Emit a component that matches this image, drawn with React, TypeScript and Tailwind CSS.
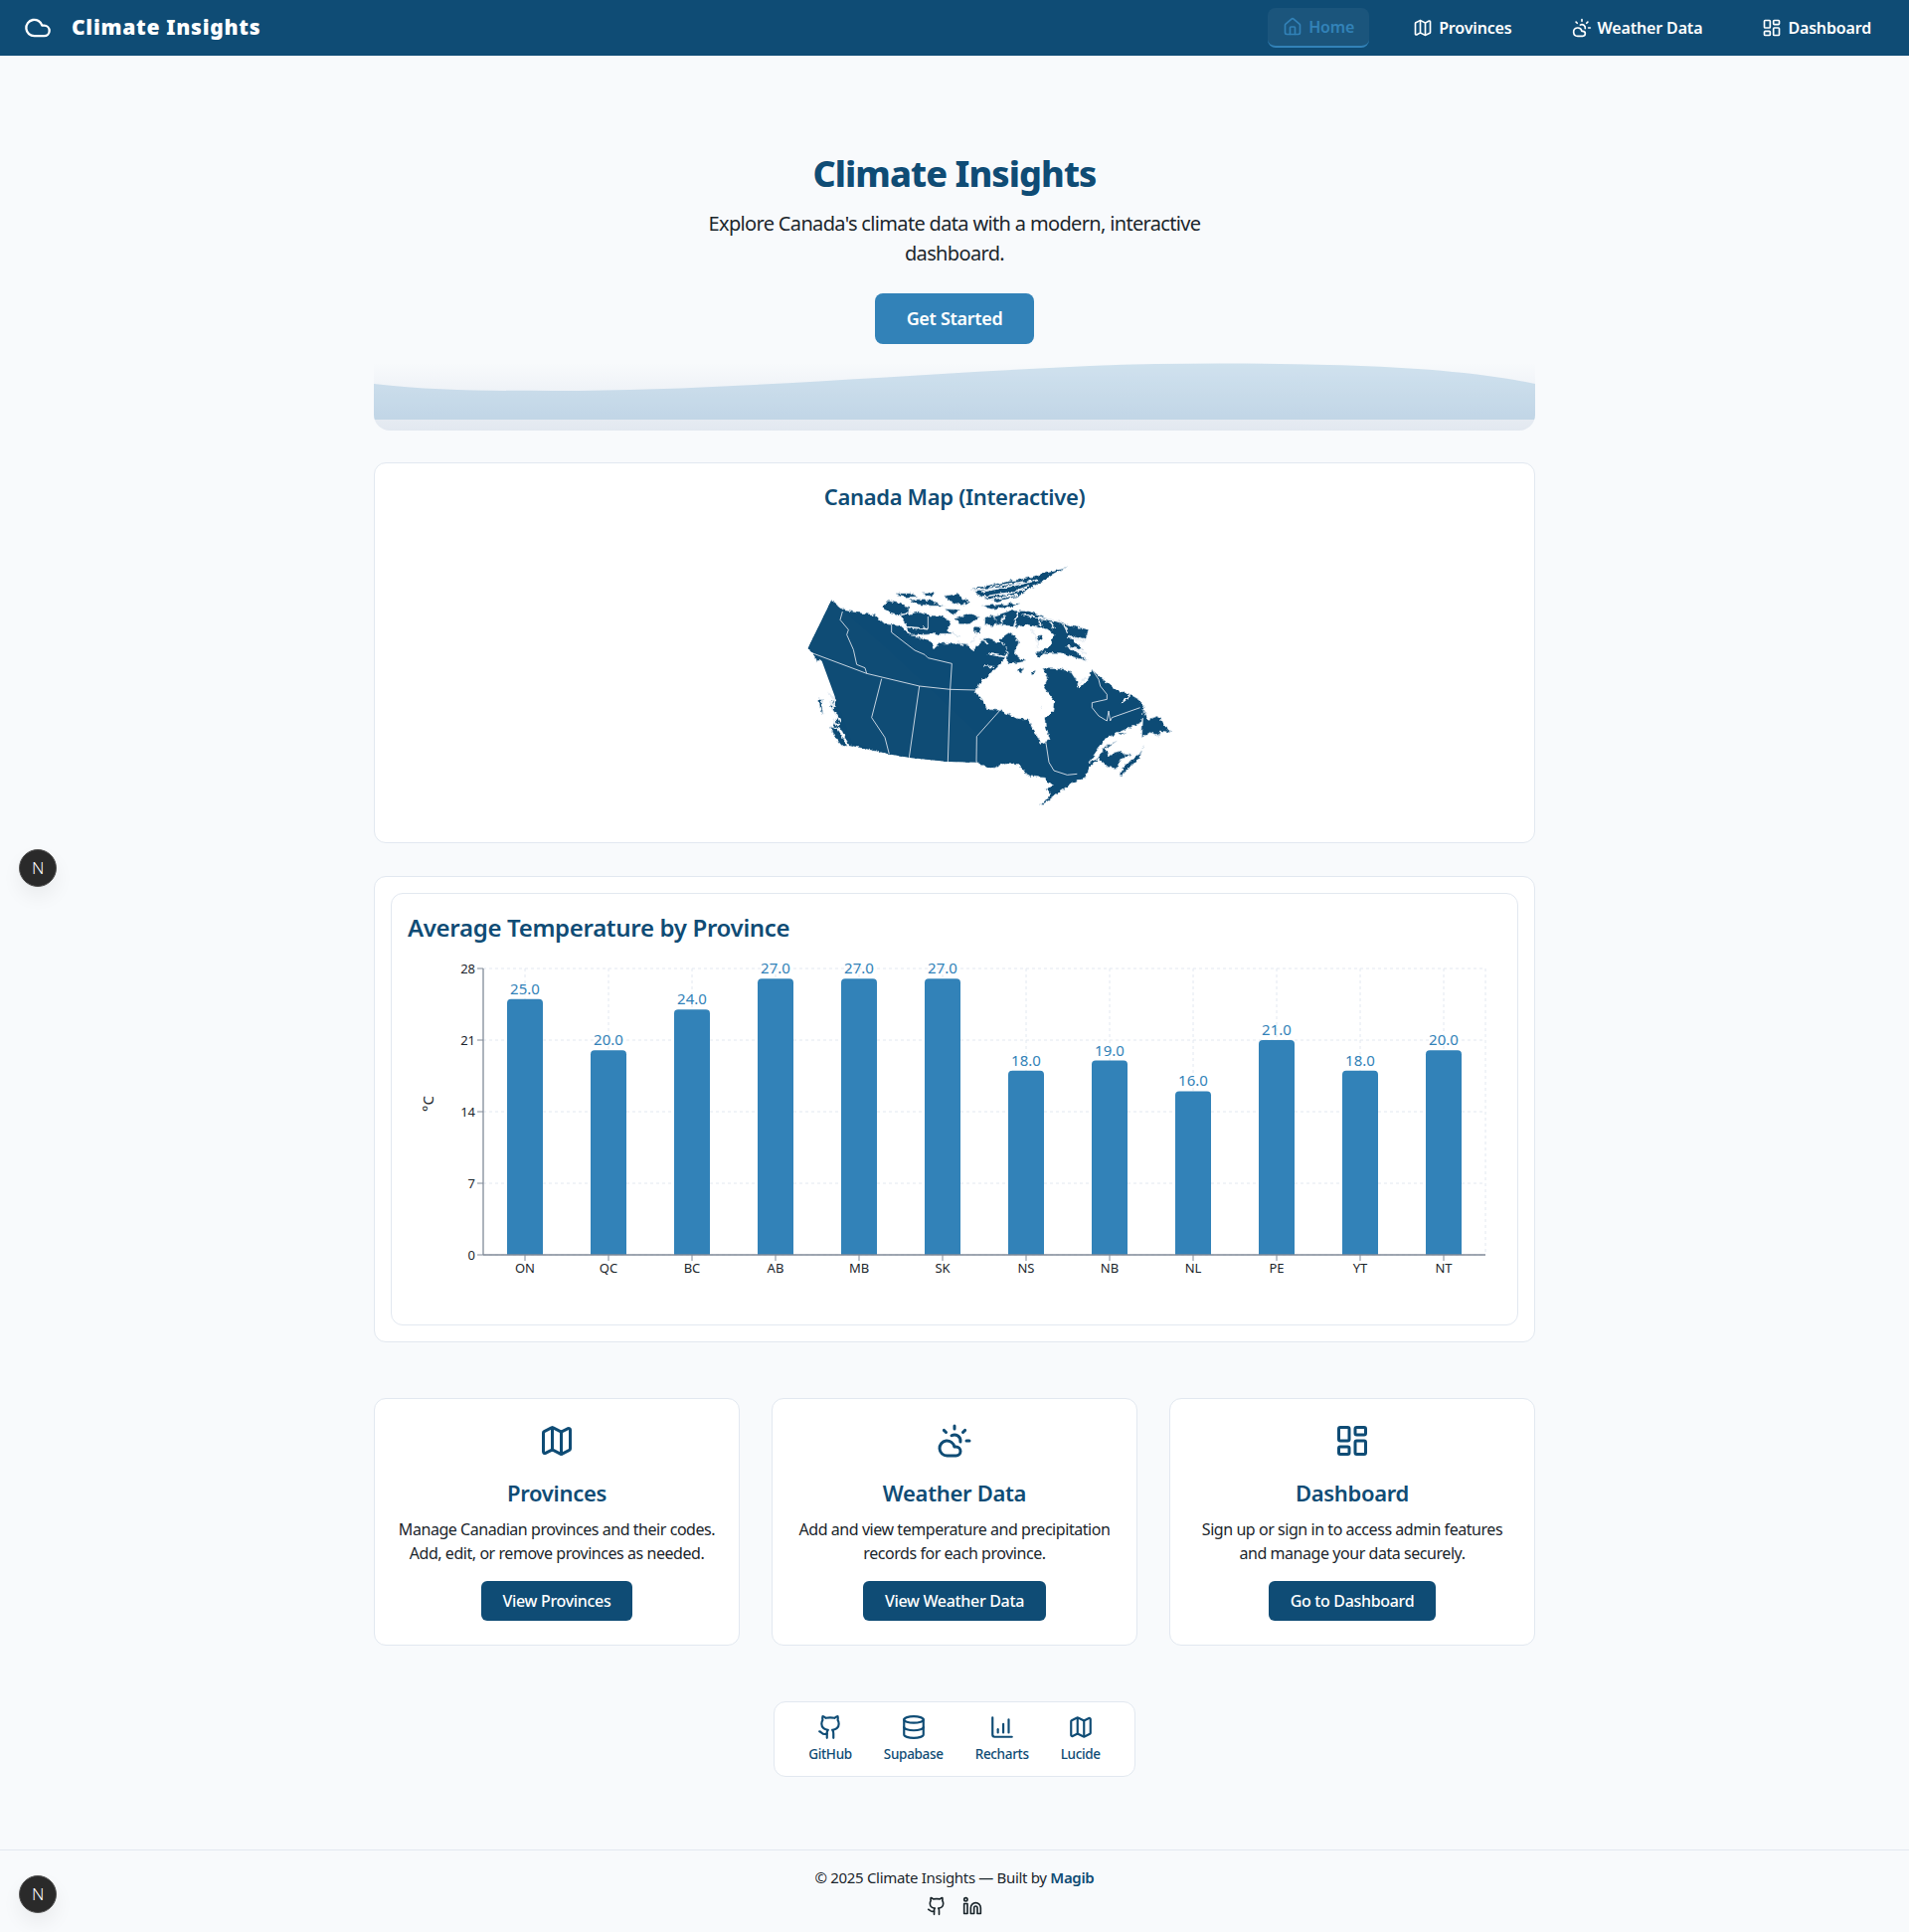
import { Cloud, House, Map, CloudSun, LayoutDashboard, Github, Database, ChartColumnIncreasing, Linkedin } from "lucide-react";

const NAVY = "#0f4c75";
const BLUE = "#3282b8";

const data: [string, number][] = [
  ["ON", 25], ["QC", 20], ["BC", 24], ["AB", 27], ["MB", 27], ["SK", 27],
  ["NS", 18], ["NB", 19], ["NL", 16], ["PE", 21], ["YT", 18], ["NT", 20],
];

const land = [
  "M138,162 L68,305 L85,322 L92,345 L118,340 L132,385 L150,430 L145,465 L135,480 L158,515 L145,540 L170,555 L180,578 L195,600 L310,625 L375,636 L490,648 L578,650 L590,658 L625,668 L665,652 L700,655 L735,692 L780,697 L805,718 L785,732 L800,745 L768,782 L790,768 L820,745 L860,715 L905,695 L918,665 L945,640 L975,665 L1000,668 L1014,640 L1032,632 L1012,618 L1000,622 L975,630 L965,608 L1000,586 L965,600 L940,640 L915,650 L938,618 L960,585 L1000,562 L1040,545 L1075,528 L1084,485 L1070,462 L1040,445 L1000,432 L965,405 L922,368 L912,400 L888,425 L875,398 L860,375 L825,368 L776,366 L792,395 L780,425 L810,465 L806,497 L782,515 L784,540 L798,582 L772,592 L745,548 L735,518 L700,518 L650,493 L608,490 L594,462 L574,440 L588,408 L620,380 L655,345 L668,318 L665,295 L635,285 L600,275 L580,295 L570,312 L540,292 L465,290 L450,305 L438,282 L395,270 L375,265 L345,238 L300,232 L270,205 L200,195 L175,190 Z",
  "M668,345 L670,322 L662,300 L645,280 L680,258 L705,288 L690,318 L722,346 L690,352 L676,354 Z",
  "M632,207 L680,192 L740,194 L790,217 L860,237 L915,250 L902,280 L852,267 L900,310 L852,297 L910,345 L830,320 L792,320 L762,330 L757,320 L802,295 L810,265 L792,250 L730,235 L700,243 L672,238 L650,233 L627,228 Z",
  "M292,185 L310,162 L345,170 L372,180 L372,200 L340,205 L315,198 Z",
  "M347,207 L400,197 L440,207 L470,207 L498,225 L488,250 L508,265 L528,270 L500,262 L470,262 L400,266 L380,268 L370,255 L357,225 Z",
  "M510,217 L558,202 L588,210 L555,233 L525,233 Z",
  "M567,240 L593,242 L588,263 L567,256 Z",
  "M602,212 L623,207 L638,222 L625,243 L602,233 Z",
  "M330,140 L380,140 L400,150 L360,152 Z",
  "M415,140 L450,138 L445,148 L420,148 Z",
  "M375,160 L420,157 L478,178 L440,178 L395,173 Z",
  "M482,147 L518,142 L556,168 L530,176 L492,163 Z",
  "M482,187 L528,190 L510,203 L490,200 Z",
  "M565,125 L640,110 L720,95 L848,63 L780,100 L740,125 L700,150 L640,165 L590,150 Z",
  "M592,177 L640,174 L708,170 L690,180 L620,188 Z",
  "M700,370 L720,365 L715,380 L700,382 Z",
  "M742,376 L755,372 L750,386 L742,386 Z",
  "M756,270 L775,265 L776,280 L760,284 Z",
  "M758,322 L785,315 L780,328 L760,333 Z",
  "M135,542 L155,550 L172,575 L188,603 L175,606 L150,575 Z",
  "M100,458 L112,462 L110,480 L114,505 L104,485 Z",
  "M1075,575 L1080,490 L1095,520 L1125,510 L1140,535 L1165,560 L1130,555 L1125,572 L1100,560 Z",
  "M1000,560 L1030,562 L1015,567 Z",
  "M1008,688 L1030,650 L1070,625 L1080,600 L1070,635 L1030,675 L1015,690 Z",
  "M1018,625 L1050,628 L1025,635 Z",
];

const water = [
  "M590,135 L680,118 L760,100", "M600,150 L690,135 L730,120", "M620,158 L700,145", "M560,130 L640,125",
  "M650,145 L720,130", "M355,240 L430,248", "M612,322 L660,332", "M850,300 L905,322", "M850,270 L900,285",
  "M715,205 L830,225", "M660,210 L650,235", "M700,200 L690,240", "M740,250 L760,275 L760,300",
  "M130,440 L150,465 L140,490", "M150,500 L165,530", "M135,470 L150,480", "M145,520 L160,540", "M1015,470 L1040,448", "M880,420 L905,395",
  "M620,120 L720,105", "M760,215 L770,235", "M800,228 L810,245", "M840,235 L850,255",
  "M590,275 L610,290", "M520,285 L535,300", "M600,360 L625,362", "M770,490 L775,480", "M560,290 L575,270",
];

const borders = [
  "M85,322 L245,382 L404,420 L497,430 L578,432",
  "M172,195 L165,220 L190,250 L185,265 L205,310 L215,355 L240,365 L245,382",
  "M320,235 L320,258 L390,312 L420,325 L430,335 L502,352 L497,430",
  "M290,398 L260,515 L300,575 L313,625",
  "M404,420 L373,636",
  "M497,430 L490,648",
  "M650,490 L577,572 L576,650",
  "M785,585 L795,650 L810,675 L850,688 L880,685",
  "M1070,485 L985,515 L980,525 L975,495 L970,525 L945,510 L925,485 L925,470 L970,460 L970,445 L950,420 L945,400 L925,370",
  "M430,210 L430,248",
];

function CanadaMap() {
  return (
    <svg viewBox="0 0 1260 840" className="block ml-[413px] w-[420px] h-[280px]">
      <defs>
        <filter id="rough" x="-5%" y="-5%" width="110%" height="110%">
          <feTurbulence type="fractalNoise" baseFrequency="0.07" numOctaves={3} seed={4} result="n" />
          <feDisplacementMap in="SourceGraphic" in2="n" scale={14} xChannelSelector="R" yChannelSelector="G" />
        </filter>
        <clipPath id="canclip">
          <path d="M138,162 L138,0 L1260,0 L1260,840 L578,840 L578,651 L490,649 L375,637 L310,626 L195,601 L0,601 L0,305 L68,305 Z" />
        </clipPath>
      </defs>
      <g clipPath="url(#canclip)">
        <g filter="url(#rough)">
          {land.map((d, i) => (
            <path key={i} d={d} fill={NAVY} stroke="#dbe5ee" strokeWidth={2} strokeLinejoin="round" />
          ))}
          {water.map((d, i) => (
            <path key={i} d={d} fill="none" stroke="#e8eef4" strokeWidth={5} strokeLinecap="round" />
          ))}
        </g>
      </g>
      <path d="M138,162 L68,305 L110,345 L200,590 L310,625 L375,636 L490,648 L578,650 L578,560 L300,300 Z" fill={NAVY} />
      {borders.map((d, i) => (
        <path key={i} d={d} fill="none" stroke="#e2e8f0" strokeWidth={2.6} />
      ))}
    </svg>
  );
}

function Chart() {
  const x0 = 486, band = 84, top = 974, bottom = 1262, unit = 288 / 28;
  const font = "'Noto Sans', sans-serif";
  return (
    <svg viewBox="410 962 1099 354" className="block w-[1099px] h-[354px] tracking-normal">
      {[0, 7, 14, 21, 28].map((t) => (
        <line key={t} x1={x0} x2={1494} y1={bottom - t * unit} y2={bottom - t * unit} stroke="#e2e8f0" strokeDasharray="3 3" />
      ))}
      {data.map((_, i) => (
        <line key={i} x1={x0 + band * (i + 0.5)} x2={x0 + band * (i + 0.5)} y1={top} y2={bottom} stroke="#e2e8f0" strokeDasharray="3 3" />
      ))}
      <line x1={1494} x2={1494} y1={top} y2={bottom} stroke="#e2e8f0" strokeDasharray="3 3" />
      {data.map(([code, v], i) => {
        const cx = x0 + band * (i + 0.5);
        const y = bottom - v * unit;
        return (
          <g key={code}>
            <path d={`M${cx - 18},${bottom} V${y + 4} Q${cx - 18},${y} ${cx - 14},${y} H${cx + 14} Q${cx + 18},${y} ${cx + 18},${y + 4} V${bottom} Z`} fill={BLUE} />
            <text x={cx} y={y - 5} textAnchor="middle" fontSize={15} fill={BLUE} fontFamily={font}>{v.toFixed(1)}</text>
            <line x1={cx} x2={cx} y1={bottom} y2={bottom + 6} stroke="#808a98" />
            <text x={cx} y={1280} textAnchor="middle" fontSize={13} fill="#1b262c" fontFamily={font}>{code}</text>
          </g>
        );
      })}
      <line x1={x0} x2={x0} y1={top} y2={bottom} stroke="#808a98" strokeWidth={1.3} />
      <line x1={x0} x2={1494} y1={bottom} y2={bottom} stroke="#808a98" strokeWidth={1.3} />
      {[0, 7, 14, 21, 28].map((t) => (
        <g key={t}>
          <line x1={x0 - 6} x2={x0} y1={bottom - t * unit} y2={bottom - t * unit} stroke="#808a98" />
          <text x={x0 - 8} y={bottom - t * unit + 5} textAnchor="end" fontSize={13} fill="#1b262c" fontFamily={font}>{t}</text>
        </g>
      ))}
      <text x={436} y={1110} textAnchor="middle" fontSize={15} fill="#1b262c" fontFamily={font} transform="rotate(-90 436 1110)">°C</text>
    </svg>
  );
}

function NBadge({ className }: { className: string }) {
  return (
    <div className={`absolute left-[19px] w-[38px] h-[38px] rounded-full bg-[#2a2a2a] border border-[#555] shadow-[0_10px_20px_rgba(0,0,0,0.06)] flex items-center justify-center text-white text-[17px] font-light ${className}`}>
      N
    </div>
  );
}

const features = [
  { Icon: Map, title: "Provinces", l1: "Manage Canadian provinces and their codes.", l2: "Add, edit, or remove provinces as needed.", btn: "View Provinces" },
  { Icon: CloudSun, title: "Weather Data", l1: "Add and view temperature and precipitation", l2: "records for each province.", btn: "View Weather Data" },
  { Icon: LayoutDashboard, title: "Dashboard", l1: "Sign up or sign in to access admin features", l2: "and manage your data securely.", btn: "Go to Dashboard" },
];

const tech = [
  { Icon: Github, label: "GitHub" },
  { Icon: Database, label: "Supabase" },
  { Icon: ChartColumnIncreasing, label: "Recharts" },
  { Icon: Map, label: "Lucide" },
];

export default function App() {
  return (
    <div className="relative min-h-[1943px] bg-[#f8fafc] text-[#1b262c] font-['Noto_Sans',sans-serif] tracking-[-0.02em]">
      <nav className="h-14 bg-[#0f4c75] flex items-center justify-between pl-6 pr-[22px] text-white">
        <div className="flex items-center gap-[20px]">
          <Cloud size={28} strokeWidth={2} />
          <span className="text-[21px] font-black tracking-[0.035em]">Climate Insights</span>
        </div>
        <div className="flex items-center gap-[28px] text-[16px] font-semibold tracking-[-0.01em]">
          <a className="flex items-center gap-[6px] h-10 px-[15px] rounded-lg bg-white/5 border-b-2 border-[#3282b8] text-[#3282b8]">
            <House size={20} />Home
          </a>
          <a className="flex items-center gap-[6px] h-10 px-4"><Map size={20} />Provinces</a>
          <a className="flex items-center gap-[6px] h-10 px-4"><CloudSun size={20} />Weather Data</a>
          <a className="flex items-center gap-[6px] h-10 px-4"><LayoutDashboard size={20} />Dashboard</a>
        </div>
      </nav>

      <main className="w-[1168px] mx-auto pt-[99px]">
        <section className="flex flex-col items-center text-center">
          <h1 className="text-[36px] leading-10 font-extrabold text-[#0f4c75] tracking-[-0.025em]">Climate Insights</h1>
          <p className="mt-[15px] text-[20px] leading-[30px] tracking-[-0.033em]">Explore Canada's climate data with a modern, interactive<br />dashboard.</p>
          <button className="mt-[25px] w-40 h-[51px] rounded-lg bg-[#3282b8] text-white text-[18px] font-semibold">Get Started</button>
        </section>

        <div className="mt-[19px] h-[68px] rounded-b-2xl overflow-hidden bg-gradient-to-b from-[#f8fafc] to-[#e2e8f0]">
          <svg viewBox="0 0 1168 57" preserveAspectRatio="none" className="block w-[1168px] h-[57px]">
            <path d="M0,21 C60,28 120,28 180,28 C350,28 520,12 720,3 C800,0 880,0 960,2 C1040,4 1110,9 1168,21 L1168,57 L0,57 Z" fill="#3282b8" fillOpacity={0.2} />
          </svg>
        </div>

        <section className="mt-8 h-[383px] rounded-xl border border-[#e2e8f0] bg-white pt-[15px]">
          <h2 className="text-[22px] leading-9 font-semibold text-[#0f4c75] text-center">Canada Map (Interactive)</h2>
          <div className="mt-[33px]"><CanadaMap /></div>
        </section>

        <section className="mt-[33px] rounded-xl border border-[#e2e8f0] bg-white p-4">
          <div className="rounded-xl border border-[#e2e8f0] bg-white p-4">
            <h2 className="mt-[2px] text-[24px] leading-8 font-semibold text-[#0f4c75]">Average Temperature by Province</h2>
            <div className="mt-[13px]"><Chart /></div>
          </div>
        </section>

        <section className="mt-[56px] grid grid-cols-3 gap-8">
          {features.map(({ Icon, title, l1, l2, btn }) => (
            <div key={title} className="h-[249px] rounded-xl border border-[#e2e8f0] bg-white pt-6 flex flex-col items-center text-center">
              <Icon size={36} color={NAVY} />
              <h3 className="mt-4 text-[22px] leading-9 font-semibold text-[#0f4c75]">{title}</h3>
              <p className="mt-[7px] text-[16px] leading-6 tracking-[-0.028em]">{l1}<br />{l2}</p>
              <button className="mt-4 h-10 px-[22px] rounded-md bg-[#0f4c75] text-white text-[16px] font-medium">{btn}</button>
            </div>
          ))}
        </section>

        <section className="mt-[56px] flex justify-center">
          <div className="h-[76px] w-[364px] rounded-xl border border-[#e2e8f0] bg-white flex items-center justify-center gap-8">
            {tech.map(({ Icon, label }) => (
              <div key={label} className="flex flex-col items-center gap-1 text-[13.5px] font-medium text-[#0f4c75]">
                <Icon size={26} />
                {label}
              </div>
            ))}
          </div>
        </section>
      </main>

      <footer className="mt-[73px] h-[83px] border-t border-[#e2e8f0] flex flex-col items-center pt-[17px]">
        <p className="text-[15px] leading-5">© 2025 Climate Insights — Built by <a className="font-semibold text-[#0f4c75]">Magib</a></p>
        <div className="mt-[9px] flex items-center gap-4">
          <Github size={20} />
          <Linkedin size={20} />
        </div>
      </footer>

      <NBadge className="top-[854px]" />
      <NBadge className="top-[1886px]" />
    </div>
  );
}
